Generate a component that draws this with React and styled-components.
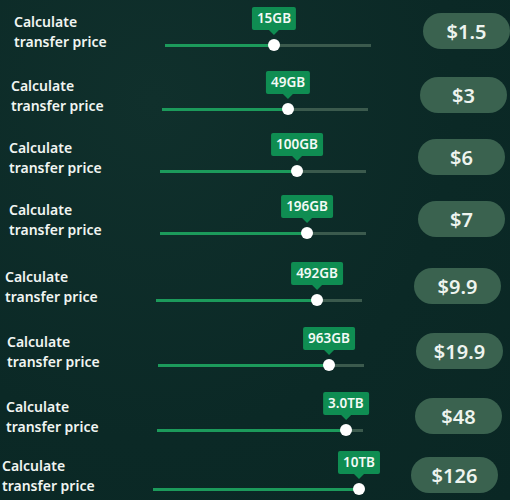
import React from "react";
import styled, { createGlobalStyle } from "styled-components";

const rows = [
  { shift: 14, top: 13, amount: "15GB", pos: 0.529, price: "$1.5" },
  { shift: 11, top: 77, amount: "49GB", pos: 0.612, price: "$3" },
  { shift: 9, top: 139, amount: "100GB", pos: 0.665, price: "$6" },
  { shift: 9, top: 201, amount: "196GB", pos: 0.714, price: "$7" },
  { shift: 5, top: 268, amount: "492GB", pos: 0.782, price: "$9.9" },
  { shift: 7, top: 333, amount: "963GB", pos: 0.83, price: "$19.9" },
  { shift: 6, top: 398, amount: "3.0TB", pos: 0.917, price: "$48" },
  { shift: 2, top: 457, amount: "10TB", pos: 1, price: "$126" },
];

const ROW_H = 37;

const GlobalStyle = createGlobalStyle`
  html, body {
    margin: 0;
    padding: 0;
    background: #0c2a27;
  }
  body {
    font-family: "Noto Sans", "Open Sans", sans-serif;
  }
`;

const Page = styled.div`
  width: 510px;
  height: 500px;
  overflow: hidden;
  background: radial-gradient(ellipse at 30% 20%, #10302c 0%, #0b2926 60%, #0a2724 100%);
  display: flex;
  flex-direction: column;
`;

const Row = styled.div`
  display: flex;
  align-items: flex-start;
  height: ${ROW_H}px;
  margin-top: ${(p) => p.$gap}px;
  padding-left: ${(p) => p.$shift}px;
`;

const Label = styled.div`
  width: 151px;
  margin-top: -1px;
  color: #f1f5f2;
  font-size: 14px;
  font-weight: 600;
  line-height: 20px;
`;

const SliderBox = styled.div`
  position: relative;
  width: 206px;
  height: ${ROW_H}px;
  padding-top: 31px;
  box-sizing: border-box;
`;

const Track = styled.div`
  display: flex;
  height: 3px;
  background: #3b5a4d;
`;

const Fill = styled.div`
  height: 100%;
  background: #1c9a5b;
`;

const Thumb = styled.div`
  position: absolute;
  top: 26px;
  width: 12px;
  height: 12px;
  margin-left: -6px;
  border-radius: 50%;
  background: #ffffff;
`;

const Bubble = styled.div`
  position: absolute;
  top: -6px;
  transform: translateX(-50%);
  height: 23px;
  padding: 0 5px;
  border-radius: 2px;
  background: #0f8d52;
  color: #f4faf6;
  font-size: 13.5px;
  font-weight: 600;
  line-height: 23px;
  white-space: nowrap;

  &::after {
    content: "";
    position: absolute;
    left: 50%;
    bottom: -5px;
    margin-left: -5px;
    border-left: 5px solid transparent;
    border-right: 5px solid transparent;
    border-top: 5px solid #0f8d52;
  }
`;

const Pill = styled.div`
  margin-left: 52px;
  width: 87px;
  height: 36px;
  border-radius: 18px;
  background: #3a624f;
  color: #eef4ef;
  font-size: 20px;
  font-weight: 600;
  display: flex;
  align-items: center;
  justify-content: center;
`;

function PriceRow({ row, gap }) {
  const pct = `${row.pos * 100}%`;
  return (
    <Row $gap={gap} $shift={row.shift}>
      <Label>
        Calculate
        <br />
        transfer price
      </Label>
      <SliderBox>
        <Track>
          <Fill style={{ width: pct }} />
        </Track>
        <Bubble style={{ left: pct }}>{row.amount}</Bubble>
        <Thumb style={{ left: pct }} />
      </SliderBox>
      <Pill>{row.price}</Pill>
    </Row>
  );
}

export default function App() {
  return (
    <>
      <GlobalStyle />
      <Page>
        {rows.map((row, i) => (
          <PriceRow
            key={row.amount}
            row={row}
            gap={i === 0 ? row.top : row.top - rows[i - 1].top - ROW_H}
          />
        ))}
      </Page>
    </>
  );
}
